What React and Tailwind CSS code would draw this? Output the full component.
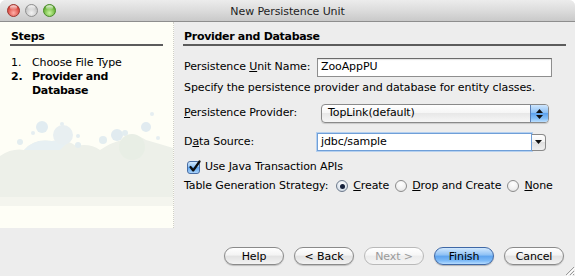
import React from "react";

function Light({ c1, c2, border }) {
  return (
    <svg width="13" height="13" viewBox="0 0 13 13" className="block">
      <defs>
        <radialGradient id={"g" + c2.slice(1)} cx="50%" cy="70%" r="60%">
          <stop offset="0%" stopColor={c1} />
          <stop offset="100%" stopColor={c2} />
        </radialGradient>
        <linearGradient id={"h" + c2.slice(1)} x1="0" y1="0" x2="0" y2="1">
          <stop offset="0%" stopColor="#ffffff" stopOpacity="0.9" />
          <stop offset="100%" stopColor="#ffffff" stopOpacity="0" />
        </linearGradient>
      </defs>
      <circle cx="6.5" cy="6.5" r="6" fill={"url(#g" + c2.slice(1) + ")"} stroke={border} strokeWidth="1" />
      <ellipse cx="6.5" cy="3.6" rx="3.6" ry="2.3" fill={"url(#h" + c2.slice(1) + ")"} />
    </svg>
  );
}

function Btn({ children, primary, disabled }) {
  const base =
    "w-[60px] h-[18px] rounded-full flex items-center justify-center text-[11px] leading-none border";
  if (primary)
    return (
      <div
        className={
          base +
          " border-[#3f68a6] text-[#000] bg-[linear-gradient(#d2e8fd,#8cc0f5_45%,#5da3ee_50%,#7dbaf7_80%,#b6dcff)] shadow-[0_1px_1px_rgba(0,0,0,0.25)]"
        }
      >
        {children}
      </div>
    );
  return (
    <div
      className={
        base +
        (disabled
          ? " border-[#b9b9b9] text-[#9a9a9a] bg-[linear-gradient(#ffffff,#f6f6f6_45%,#ececec_50%,#f4f4f4)]"
          : " border-[#8a8a8a] text-[#000] bg-[linear-gradient(#ffffff,#f3f3f3_45%,#e2e2e2_50%,#f2f2f2)] shadow-[0_1px_1px_rgba(0,0,0,0.2)]")
      }
    >
      {children}
    </div>
  );
}

function Radio({ on }) {
  return (
    <div
      className={
        "w-[12px] h-[12px] rounded-full border flex items-center justify-center shrink-0 " +
        (on
          ? "border-[#6d7a8c] bg-[radial-gradient(circle_at_50%_30%,#ffffff,#dfe6ee_60%,#c3cedb)]"
          : "border-[#8c8c8c] bg-[radial-gradient(circle_at_50%_30%,#ffffff,#f0f0f0_60%,#d8d8d8)]")
      }
    >
      {on && <div className="w-[5px] h-[5px] rounded-full bg-[#15203a]" />}
    </div>
  );
}

export default function App() {
  return (
    <div className="w-[575px] h-[276px] bg-white overflow-hidden font-['DejaVu_Sans',sans-serif] text-[11px] text-[#000] tracking-[-0.1px]">
      <div className="w-full h-full rounded-t-[6px] bg-[#ededed] flex flex-col overflow-hidden relative">
        {/* title bar */}
        <div className="h-[22px] shrink-0 grid grid-cols-[1fr_auto_1fr] items-center bg-[linear-gradient(#ececec,#dcdcdc_50%,#c9c9c9)] border-b border-[#8e8e8e]">
          <div className="flex items-center gap-[5px] pl-[7px]">
            <Light c1="#ffb0a8" c2="#d4372e" border="#9a3a33" />
            <Light c1="#f4f4f4" c2="#bdbdbd" border="#8f8f8f" />
            <Light c1="#c8f5a0" c2="#5aa826" border="#4b8a2c" />
          </div>
          <div className="text-[#1e1e1e] leading-none pt-[1px]">New Persistence Unit</div>
          <div />
        </div>

        {/* main */}
        <div className="h-[206px] shrink-0 flex">
          {/* left steps panel */}
          <div className="w-[174px] shrink-0 bg-[#fefef6] border-r border-dotted border-[#cfcfc8] flex flex-col">
            <div className="px-[10px] pt-[8px]">
              <div className="font-bold tracking-[-0.3px] leading-[13px] pl-[1px] pb-[1px] border-b-2 border-[#5c5c5c]">
                Steps
              </div>
              <div className="mt-[10px] grid grid-cols-[21px_1fr] leading-[14px] pl-[1px]">
                <div>1.</div>
                <div>Choose File Type</div>
                <div className="font-bold">2.</div>
                <div className="font-bold tracking-[-0.3px]">
                  Provider and
                  <br />
                  Database
                </div>
              </div>
            </div>
            <svg width="173" height="120" viewBox="0 0 173 120" className="block mt-auto">
              <rect x="0" y="89" width="173" height="9" fill="#f4f5ee" />
              <path
                d="M0 48 Q12 40 24 42 Q34 30 52 33 Q66 30 76 38 Q90 35 100 42 Q112 34 122 32 Q134 24 146 32 Q160 36 173 40 L173 89 L0 89 Z"
                fill="#edf0e9"
              />
              <path d="M24 42 Q34 30 52 33 Q60 31 66 36 L60 42 Z" fill="#e7f0f3" />
              <circle cx="42" cy="19" r="6" fill="#e1ecf1" />
              <circle cx="62" cy="16" r="2" fill="#e5eef1" />
              <circle cx="33" cy="25" r="2" fill="#e5eef1" />
              <circle cx="20" cy="34" r="3" fill="#e3edf0" />
              <circle cx="63" cy="27" r="10" fill="#e8eff1" />
              <circle cx="78" cy="28" r="2" fill="#e3edf0" />
              <circle cx="78" cy="37" r="3" fill="#e3edf0" />
              <circle cx="103" cy="32" r="4" fill="#e3edf0" />
              <circle cx="117" cy="27" r="6" fill="#e1ebf0" />
              <circle cx="125" cy="25" r="3" fill="#e3edf0" />
              <circle cx="146" cy="19" r="5" fill="#e1ebf0" />
              <circle cx="152" cy="6" r="2" fill="#e5eef1" />
              <circle cx="158" cy="30" r="2" fill="#e5eef1" />
              <circle cx="132" cy="39" r="13" fill="#e8eee5" />
            </svg>
          </div>

          {/* right content */}
          <div className="flex-1 pl-[9px] pr-[9px] pt-[8px]">
            <div className="font-bold tracking-[-0.3px] leading-[13px] pl-[1px] pb-[1px] border-b-2 border-[#5c5c5c]">
              Provider and Database
            </div>

            <div className="mt-[12px] flex items-center h-[19px]">
              <div className="w-[134px] pl-[1px]">
                Persistence <span className="underline">U</span>nit Name:
              </div>
              <div className="w-[235px] h-[19px] bg-white border border-[#8e8e8e] border-t-[#6a6a6a] shadow-[inset_0_1px_1px_rgba(0,0,0,0.12)] flex items-center pl-[3px]">
                ZooAppPU
              </div>
            </div>

            <div className="mt-[4px] leading-[14px] pl-[1px]">
              Specify the persistence provider and database for entity classes.
            </div>

            <div className="mt-[9px] flex items-center h-[19px]">
              <div className="w-[138px] pl-[1px]">
                <span className="underline">P</span>ersistence Provider:
              </div>
              <div className="w-[228px] h-[19px] flex rounded-[4px] border border-[#8a8a8a] overflow-hidden bg-[linear-gradient(#ffffff,#f6f6f6_45%,#e8e8e8_50%,#f6f6f6)] shadow-[0_1px_1px_rgba(0,0,0,0.15)]">
                <div className="flex-1 pl-[6px] flex items-center">TopLink(default)</div>
                <div className="w-[18px] border-l border-[#5a7fb5] bg-[linear-gradient(#cfe6fd,#8cc0f5_45%,#5ea3ee_50%,#86c0f8_80%,#bde0ff)] flex flex-col items-center justify-center gap-[2px]">
                  <svg width="7" height="4" viewBox="0 0 7 4" className="block">
                    <path d="M3.5 0 L7 4 L0 4 Z" fill="#111" />
                  </svg>
                  <svg width="7" height="4" viewBox="0 0 7 4" className="block">
                    <path d="M0 0 L7 0 L3.5 4 Z" fill="#111" />
                  </svg>
                </div>
              </div>
            </div>

            <div className="mt-[10px] flex items-center h-[18px]">
              <div className="w-[134px] pl-[1px]">
                D<span className="underline">a</span>ta Source:
              </div>
              <div className="w-[215px] h-[18px] bg-white border border-[#6f9fd8] shadow-[0_0_0_1px_#b5d0ef] flex items-center pl-[3px]">
                jdbc/sample
              </div>
              <div className="w-[14px] h-[17px] rounded-r-[4px] border border-l-0 border-[#8a8a8a] bg-[linear-gradient(#ffffff,#f2f2f2_50%,#e0e0e0_50%,#f0f0f0)] flex items-center justify-center">
                <svg width="7" height="4" viewBox="0 0 7 4" className="block">
                  <path d="M0 0 L7 0 L3.5 4 Z" fill="#111" />
                </svg>
              </div>
            </div>

            <div className="mt-[8px] flex items-center h-[16px] pl-[4px] gap-[5px]">
              <div className="w-[13px] h-[13px] rounded-[3px] border border-[#4a6da3] bg-[linear-gradient(#d4e9fd,#8ec2f5_45%,#5fa4ee_50%,#a8d3fb)] relative shrink-0">
                <svg width="13" height="13" viewBox="0 0 13 13" className="absolute left-[0px] top-[-2px]">
                  <path d="M2.5 7 L5.2 10.5 L11.5 1.5" fill="none" stroke="#0d0d0d" strokeWidth="2.2" strokeLinecap="round" strokeLinejoin="round" />
                </svg>
              </div>
              <div>
                Use <span className="underline">J</span>ava Transaction APIs
              </div>
            </div>

            <div className="mt-[4px] flex items-center h-[14px] pl-[1px]">
              <div>Table Generation Strategy:</div>
              <div className="ml-[8px]">
                <Radio on />
              </div>
              <div className="ml-[5px]">
                <span className="underline">C</span>reate
              </div>
              <div className="ml-[6px]">
                <Radio />
              </div>
              <div className="ml-[5px]">
                <span className="underline">D</span>rop and Create
              </div>
              <div className="ml-[6px]">
                <Radio />
              </div>
              <div className="ml-[5px]">
                <span className="underline">N</span>one
              </div>
            </div>
          </div>
        </div>

        {/* buttons */}
        <div className="flex justify-end gap-[10px] pr-[11px] pt-[19px]">
          <Btn>Help</Btn>
          <Btn>&lt; Back</Btn>
          <Btn disabled>Next &gt;</Btn>
          <Btn primary>Finish</Btn>
          <Btn>Cancel</Btn>
        </div>

        {/* resize grip */}
        <svg width="12" height="12" viewBox="0 0 12 12" className="absolute right-0 bottom-0">
          <path d="M11 3 L3 11 M11 7 L7 11 M11 10 L10 11" stroke="#9a9a9a" strokeWidth="1" />
          <path d="M12 4 L4 12 M12 8 L8 12" stroke="#ffffff" strokeWidth="1" />
        </svg>
      </div>
    </div>
  );
}
